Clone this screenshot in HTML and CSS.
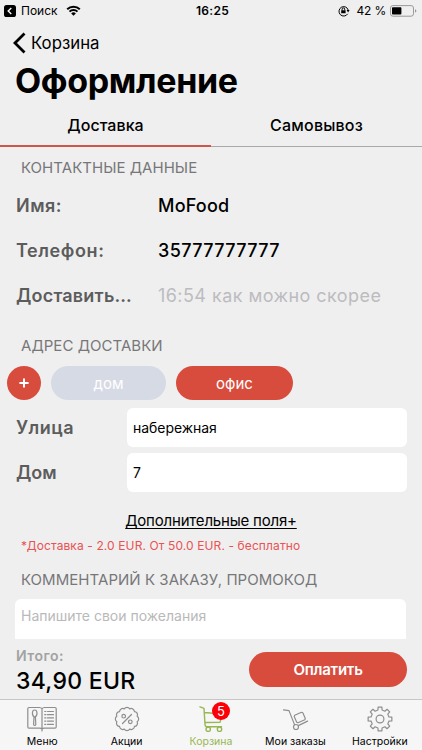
FILE: index.html
```html
<!DOCTYPE html>
<html lang="ru">
<head>
<meta charset="utf-8">
<meta name="viewport" content="width=device-width, initial-scale=1">
<title>Оформление</title>
<link rel="stylesheet" href="styles.css">
</head>
<body>
<div class="screen">
  <header class="status">
    <div class="status-left">
      <svg class="app-back" viewBox="0 0 12 12"><rect width="12" height="12" rx="2.6"/><path d="M7.3 3 4.2 6l3.1 3"/></svg>
      <span class="status-app">Поиск</span>
      <svg class="wifi" viewBox="0 0 15 11"><path d="M1.2 4.2a9 9 0 0 1 12.6 0M3.5 6.6a5.7 5.7 0 0 1 8 0"/><path class="dot" d="M7.5 10.8 5.2 8.4a3.3 3.3 0 0 1 4.6 0z"/></svg>
    </div>
    <span class="clock">16:25</span>
    <div class="status-right">
      <svg class="lock" viewBox="0 0 12 12"><path d="M9.7 8.8A4.7 4.7 0 1 1 10.2 5"/><path class="fill" d="M8.6 5.1h3l-1.5 2.3zM3.2 5.2h4.4v3.1H3.2z"/><path d="M4.1 5.3V4.2a1.3 1.3 0 0 1 2.6 0v1.1"/></svg>
      <span class="percent">42 %</span>
      <svg class="battery" viewBox="0 0 27 12"><rect class="shell" x=".5" y=".6" width="23" height="10.6" rx="2.4"/><rect class="level" x="2" y="2.2" width="9.4" height="7.4" rx=".8"/><path class="cap" d="M25 4.2q1.4.5 1.4 1.7T25 7.6z"/></svg>
    </div>
  </header>

  <nav class="nav">
    <svg class="chevron" viewBox="0 0 13 22"><path d="M11.5 1.6 2 11l9.5 9.4"/></svg>
    <span class="nav-label">Корзина</span>
  </nav>
  <h1 class="title"><span>Оформление</span></h1>

  <div class="tabs">
    <div class="tab active"><span>Доставка</span></div>
    <div class="tab"><span>Самовывоз</span></div>
  </div>

  <main class="form">
    <h2 class="caption contacts"><span>КОНТАКТНЫЕ ДАННЫЕ</span></h2>
    <div class="row"><span class="label"><span class="name">Имя:</span></span><span class="value v-name">MoFood</span></div>
    <div class="row"><span class="label"><span class="phone">Телефон:</span></span><span class="value v-phone">35777777777</span></div>
    <div class="row"><span class="label"><span class="deliver">Доставить…</span></span><span class="value hint">16:54 как можно скорее</span></div>

    <h2 class="caption address"><span>АДРЕС ДОСТАВКИ</span></h2>
    <div class="chips">
      <button class="add"><svg viewBox="0 0 10 10"><path d="M5 .4v9.2M.4 5h9.2"/></svg></button>
      <button class="chip muted">дом</button>
      <button class="chip">офис</button>
    </div>
    <div class="field"><span class="label"><span class="street">Улица</span></span><div class="input"><span>набережная</span></div></div>
    <div class="field"><span class="label"><span class="house">Дом</span></span><div class="input"><span>7</span></div></div>
    <a class="more"><span>Дополнительные поля+</span></a>
    <p class="note"><span>*Доставка - 2.0 EUR. От 50.0 EUR. - бесплатно</span></p>
    <h2 class="caption comment"><span>КОММЕНТАРИЙ К ЗАКАЗУ, ПРОМОКОД</span></h2>
    <div class="textarea"><span>Напишите свои пожелания</span></div>
  </main>

  <section class="checkout">
    <div class="total">
      <span class="total-label">Итого:</span>
      <span class="total-sum">34,90 EUR</span>
    </div>
    <button class="pay"><span>Оплатить</span></button>
  </section>

  <footer class="tabbar">
    <div class="item">
      <svg class="icon" viewBox="0 0 30 26"><path d="M15 2.8Q14.2 1.5 12.5 1.5H2Q.8 1.5.8 2.7V21q0 1.2 1.2 1.2h10.7q1.5 0 2.3 1 .8-1 2.3-1H28q1.2 0 1.2-1.2V2.7q0-1.2-1.2-1.2H17.5Q15.800 1.500 15 2.800V25"/><path d="M7.700 11.200C4.300 9.400 5 4 7.700 4s3.400 5.400 0 7.200zM7 11l-.4 7.300q.2 1.200 1.100 1.200t1.100-1.200L8.400 11M17.700 5.500h1.200m1.600 0h6M17.700 8.700h1.200m1.600 0h6M17.700 11.900h1.200m1.600 0h6M17.700 15.100h1.200m1.600 0h6M17.700 18.300h1.200m1.600 0h6"/></svg>
      <span class="t-menu">Меню</span>
    </div>
    <div class="item">
      <svg class="icon" viewBox="-15 -13 30 26"><path d="M10.140-2.720A3.200 3.200 0 0 1 10.140 2.720 3.200 3.200 0 0 1 7.420 7.420 3.200 3.200 0 0 1 2.720 10.140 3.200 3.200 0 0 1-2.720 10.140 3.200 3.200 0 0 1-7.420 7.420 3.200 3.200 0 0 1-10.140 2.720 3.200 3.200 0 0 1-10.140-2.720 3.200 3.200 0 0 1-7.420-7.420 3.200 3.200 0 0 1-2.720-10.140 3.200 3.200 0 0 1 2.720-10.140 3.200 3.200 0 0 1 7.420-7.420 3.200 3.200 0 0 1 10.140-2.720z"/><path d="M4.500-4.500-4.500 4.500"/><circle cx="-3.300" cy="-2.800" r="1.800"/><circle cx="3.300" cy="2.800" r="1.800"/></svg>
      <span class="t-promo">Акции</span>
    </div>
    <div class="item current">
      <div class="icon-box">
        <svg class="icon" viewBox="0 0 30 26"><path d="M4 .8l4 1.600L9 18.500M8.300 6.500 26.500 8l-2.500 8.200L8.900 16.500M9 18.500q.2 2.200 2 2.200h14.500"/><circle cx="12.200" cy="23.200" r="2.200"/><circle cx="23.500" cy="23.200" r="2.200"/></svg>
        <span class="badge">5</span>
      </div>
      <span class="t-cart">Корзина</span>
    </div>
    <div class="item">
      <svg class="icon" viewBox="0 0 30 26"><path d="M3.500 3.800 9 4.600l5.500 14M18.300 19.600l9.300-4.500"/><circle cx="16" cy="21" r="2.500"/><path d="m14.700 9.300 6.800-3 1.300.5 2.500 5.700-.5 1.300-6.800 3-1.300-.5-2.500-5.700z"/></svg>
      <span class="t-orders">Мои заказы</span>
    </div>
    <div class="item">
      <svg class="icon" viewBox="-15 -13 30 26"><path d="M11.850-1.880V1.880L8.960 2.070 7.800 4.880 9.710 7.050 7.050 9.710 4.880 7.800 2.070 8.960 1.880 11.850H-1.880L-2.070 8.960-4.880 7.800-7.050 9.710-9.710 7.050-7.800 4.880-8.960 2.070-11.850 1.880V-1.880L-8.960-2.070-7.800-4.880-9.710-7.050-7.050-9.710-4.880-7.800-2.070-8.960-1.880-11.850H1.880L2.070-8.960 4.880-7.800 7.050-9.710 9.710-7.050 7.800-4.880 8.960-2.070z"/><circle r="3.900"/></svg>
      <span class="t-settings">Настройки</span>
    </div>
  </footer>
</div>
</body>
</html>
```

FILE: styles.css
```css
* { box-sizing: border-box; }
body { margin: 0; font-family: Inter, "Liberation Sans", sans-serif; background: #efefef; color: #000; }
h1, h2, p { margin: 0; font-weight: 400; }
button { border: 0; padding: 0; font: inherit; }
svg { display: block; fill: none; stroke: #000; flex: none; }
.screen { width: 422px; height: 750px; display: flex; flex-direction: column; overflow: hidden; white-space: nowrap; }

.status { height: 22px; display: grid; grid-template-columns: 1fr auto 1fr; align-items: center; font-size: 12px; line-height: 14px; padding: 0 5px 1px 4px; }
.status-left, .status-right { display: flex; align-items: center; }
.status-right { justify-content: flex-end; }
.app-back { width: 12px; height: 12px; margin-right: 5px; }
.app-back rect { fill: #000; stroke: none; }
.app-back path { stroke: #fff; stroke-width: 1.4; }
.wifi { width: 15px; height: 11px; margin-left: 8px; }
.wifi path { stroke-width: 2; }
.wifi .dot { fill: #000; stroke: none; }
.clock { font-weight: 600; letter-spacing: .3px; padding-left: 4px; }
.lock { width: 12px; height: 12px; margin-right: 7px; }
.lock .fill { fill: #000; stroke: none; }
.percent { letter-spacing: -.2px; }
.battery { width: 27px; height: 12px; margin-left: 4px; }
.battery .shell { stroke: #999; }
.battery .level { fill: #000; stroke: none; }
.battery .cap { fill: #999; stroke: none; }

.nav { height: 42px; display: flex; align-items: center; padding-left: 13px; }
.chevron { width: 13px; height: 22px; margin-right: 5px; }
.chevron path { stroke-width: 2.8; }
.nav-label { font-size: 16.800px; }
.title { height: 37px; line-height: 34px; padding-left: 15px; font-size: 34px; font-weight: 700; letter-spacing: -.35px; }

.tabs { height: 46px; display: grid; grid-template-columns: 1fr 1fr; }
.tab { border-bottom: 1px solid #a9a9a9; display: flex; justify-content: center; align-items: center; font-size: 16px; font-weight: 500; padding-top: 3px; letter-spacing: .2px; }
.tab.active { border-bottom: 2px solid #d0564b; padding-top: 4px; letter-spacing: .05px; }

.form { height: 492px; display: flex; flex-direction: column; }
.caption { flex: none; padding-left: 21px; font-size: 15px; color: #77777a; display: flex; align-items: center; letter-spacing: .04px; }
.contacts { height: 36px; padding-top: 4px; }
.row { height: 45px; display: flex; align-items: center; flex: none; padding-bottom: 1px; }
.label { width: 158px; flex: none; padding-left: 16px; font-size: 18px; font-weight: 600; color: #5c5c5c; }
.name { letter-spacing: .5px; }
.phone { letter-spacing: .6px; }
.deliver { letter-spacing: .2px; }
.street { letter-spacing: .5px; }
.value { font-size: 18px; font-weight: 500; letter-spacing: .2px; }
.v-phone { letter-spacing: .37px; }
.value.hint { font-weight: 400; color: #bcbcc0; letter-spacing: .44px; }
.address { height: 48px; padding-top: 6px; }
.chips { height: 34px; flex: none; display: flex; gap: 10px; padding-left: 7px; }
.add { width: 34px; border-radius: 50%; background: #d84c3e; display: grid; place-items: center; }
.add svg { width: 10px; height: 10px; stroke: #fff; stroke-width: 2; }
.chip { width: 115px; border-radius: 17px; background: #d84c3e; color: #fff; font-size: 15px; }
.chip + .chip { width: 117px; }
.chip.muted { background: #d6dae5; }
.field { height: 39px; flex: none; display: flex; align-items: center; margin: 8px 15px 0 0; }
.field + .field { margin-top: 6px; }
.field .label { width: 127px; }
.input { flex: 1; height: 39px; border-radius: 6px; background: #fff; padding-left: 6px; padding-bottom: 1px; font-size: 14px; display: flex; align-items: center; letter-spacing: -.05px; }
.more { height: 26px; line-height: 26px; margin-top: 16px; text-align: center; font-size: 15px; letter-spacing: -.2px; text-decoration: underline; text-underline-offset: 2px; }
.note { height: 22px; line-height: 23px; padding-left: 21px; font-size: 12px; color: #ea5254; letter-spacing: .11px; }
.comment { height: 42px; padding-top: 5px; }
.textarea { height: 40px; flex: none; margin: 1px 16px 0 15px; border-radius: 6px 6px 0 0; background: #fff; padding: 0 6px 7px; font-size: 14px; color: #b9b9b9; display: flex; align-items: center; }

.checkout { height: 60px; display: flex; justify-content: space-between; padding: 8px 15px 0 16px; }
.total { display: flex; flex-direction: column; }
.total-label { height: 17px; line-height: 17px; font-size: 14px; font-weight: 600; color: #a2a2a2; letter-spacing: .5px; }
.total-sum { line-height: 34px; font-size: 23px; font-weight: 500; letter-spacing: .3px; }
.pay { width: 158px; height: 35px; margin-top: 5px; border-radius: 18px; background: #d84c3e; color: #fff; font-size: 15px; font-weight: 600; letter-spacing: -.25px; }

.tabbar { height: 51px; background: #f6f6f6; border-top: 1px solid #c6c6c8; display: grid; grid-template-columns: repeat(5, 1fr); }
.item { display: flex; flex-direction: column; align-items: center; padding-top: 6px; font-size: 10.500px; line-height: 13px; gap: 3px; }
.icon-box { position: relative; }
.icon { width: 30px; height: 26px; stroke: #8e8e8e; stroke-width: 1.200; stroke-linejoin: round; stroke-linecap: round; }
.current { color: #98b653; }
.current .icon { stroke: #98b653; stroke-width: 1.400; }
.badge { position: absolute; left: 16px; top: -4px; width: 18px; height: 18px; border-radius: 50%; background: #fb0007; color: #fff; font-size: 13px; line-height: 18px; text-align: center; }
```
